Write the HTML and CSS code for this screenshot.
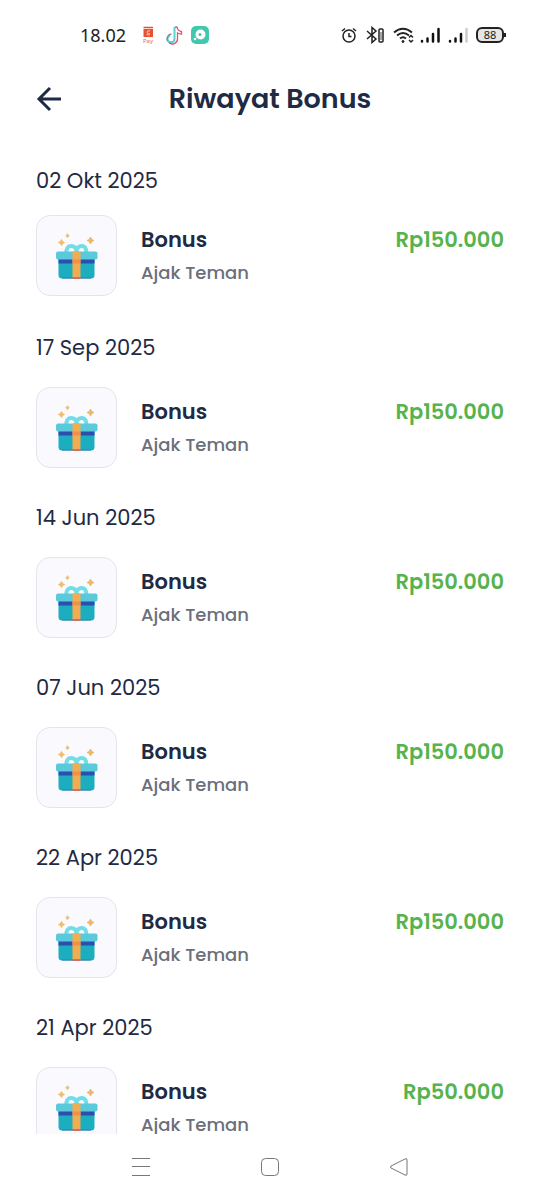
FILE: index.html
```html
<!DOCTYPE html>
<html lang="id">
<head>
<meta charset="utf-8">
<meta name="viewport" content="width=device-width, initial-scale=1">
<title>Riwayat Bonus</title>
<link rel="stylesheet" href="styles.css">
</head>
<body>
<svg class="sprite" aria-hidden="true">
  <symbol id="gift" viewBox="0 0 44 48">
    <path d="M6.500 7.500L7.500 9.500L9.500 10.500L7.500 11.500L6.500 13.500L5.500 11.500L3.500 10.500L5.500 9.500Z" fill="#efbd69" stroke="#efbd69" stroke-linejoin="round"/>
    <path d="M12.500 1.500L13.200 3L14.500 3.700L13.200 4.400L12.500 6L11.800 4.400L10.500 3.700L11.800 3Z" fill="#efbd69" stroke="#efbd69" stroke-width=".6" stroke-linejoin="round"/>
    <path d="M35.500 5L36.700 7.500L39 8.500L36.700 9.500L35.500 12L34.300 9.500L32 8.500L34.300 7.500Z" fill="#efb95b" stroke="#efb95b" stroke-linejoin="round"/>
    <path d="M11.500 21C10 12 21.500 11.500 21.500 20C21.500 11.500 33 12 31 21" fill="none" stroke="#70dde7" stroke-width="4"/>
    <path d="M3.500 27H39.500V43Q39.500 46.500 36 46.500H7Q3.500 46.500 3.500 43Z" fill="#1caebf"/>
    <path d="M3.500 27H39.500V31.500H3.500Z" fill="#2a4fae"/>
    <rect x="1" y="19.500" width="41.500" height="8" rx="2" fill="#5bc9dc"/>
    <path d="M17.500 19.500H25.500V46.500H17.500Z" fill="#f1ad50"/>
    <path d="M17.500 27.500H25.500V31.500H17.500Z" fill="#ee914b"/>
    <path d="M7 46H36" stroke="#3b78c0"/>
    <path d="M17.500 46H25.500" stroke="#e8615a" stroke-width="1.500"/>
  </symbol>
</svg>

<div class="statusbar">
  <div class="status-left">
    <span class="clock">18.02</span>
    <svg class="app-icon" viewBox="0 0 20 20" aria-hidden="true">
      <path d="M5.500 4H15V12H5.500Z" fill="#e8502f"/>
      <path d="M5.500 2.500H15" fill="none" stroke="#e8502f" stroke-width="1.500"/>
      <path d="M12 6Q9 5 9 7T12 9Q11 11 8.500 9.500" fill="none" stroke="#ffc8b6"/>
      <text x="10" y="18" class="pay">Pay</text>
    </svg>
    <svg class="app-icon" viewBox="0 0 20 20" aria-hidden="true">
      <g fill="none" stroke-width="1.300">
        <path d="M10.500 2V14A3.500 3.500 0 1 1 6 10.500" stroke="#54d3d4" stroke-width="2"/>
        <path d="M13 2Q13.500 6 17.500 6.500V9Q15 9 13.500 8V14A5 5 0 0 1 5 17.500" stroke="#ed4d70"/>
        <path d="M11 2H13.500M7.500 9A5 5 0 0 0 3.500 16" stroke="#8b8992"/>
      </g>
    </svg>
    <svg class="app-icon" viewBox="0 0 20 20" aria-hidden="true">
      <rect x="1" y="1" width="18" height="18" rx="5" fill="#40c7ae"/>
      <circle cx="10.500" cy="9.500" r="5" fill="#fff"/>
      <circle cx="5" cy="14" r="1.300" fill="#fff"/>
      <circle cx="10" cy="9.500" r="1.500" fill="#40c7ae"/>
    </svg>
  </div>
  <div class="status-right">
    <svg class="alarm" viewBox="0 0 16 18" fill="none" stroke="#222" stroke-width="1.500" aria-hidden="true">
      <circle cx="8" cy="10" r="6"/><path d="M8 7V10.500H10.500M1 5L4 2.500M15 5L12 2.500"/>
    </svg>
    <svg class="bluetooth" viewBox="0 0 20 18" fill="none" stroke="#222" stroke-width="1.500" aria-hidden="true">
      <path d="M2 5L11 13L7 16.500V1.500L11 5L2 13"/><rect x="14" y="3" width="4" height="13" rx="1"/><path d="M16 6V14" stroke="#888"/>
    </svg>
    <svg class="wifi" viewBox="0 0 22 18" fill="none" stroke="#222" stroke-width="2" aria-hidden="true">
      <path d="M1 6.500Q10 -1 19 6.500M4 9.500Q10 4.500 16 9.500M7 12.500Q10 10 13 12.500"/>
      <circle cx="10" cy="15.500" r="1" fill="#222" stroke-width="1"/>
      <path d="M16 11.500L18 9.500L20 11.500M16 14L18 16L20 14" stroke-width="1.500"/>
    </svg>
    <svg class="signal" viewBox="0 0 20 18" stroke="#111" stroke-width="2.500" stroke-linecap="round" aria-hidden="true">
      <path d="M2 15V15.500M7.500 12.500V15.500M13 8V15.500M18.500 3V15.500"/>
    </svg>
    <svg class="signal" viewBox="0 0 20 18" stroke="#111" stroke-width="2.500" stroke-linecap="round" aria-hidden="true">
      <path d="M2 15V15.500M7.500 12.500V15.500M13 8V15.500"/><path d="M18.500 3V15.500" stroke="#ccc"/>
    </svg>
    <span class="battery">88</span>
  </div>
</div>

<header class="header">
  <button class="back" type="button" aria-label="Kembali">
    <svg viewBox="0 0 26 26" fill="none" stroke="#1f2a44" stroke-width="3" aria-hidden="true"><path d="M25 13H3M14 2L3 13L14 24"/></svg>
  </button>
  <h1 class="title">Riwayat Bonus</h1>
</header>

<main class="history">
  <section class="group">
    <h2 class="date">02 Okt 2025</h2>
    <div class="entry">
      <div class="tile"><svg class="gift"><use href="#gift"/></svg></div>
      <div class="info"><p class="name">Bonus</p><p class="detail">Ajak Teman</p></div>
      <p class="amount">Rp150.000</p>
    </div>
  </section>
  <section class="group">
    <h2 class="date">17 Sep 2025</h2>
    <div class="entry">
      <div class="tile"><svg class="gift"><use href="#gift"/></svg></div>
      <div class="info"><p class="name">Bonus</p><p class="detail">Ajak Teman</p></div>
      <p class="amount">Rp150.000</p>
    </div>
  </section>
  <section class="group">
    <h2 class="date">14 Jun 2025</h2>
    <div class="entry">
      <div class="tile"><svg class="gift"><use href="#gift"/></svg></div>
      <div class="info"><p class="name">Bonus</p><p class="detail">Ajak Teman</p></div>
      <p class="amount">Rp150.000</p>
    </div>
  </section>
  <section class="group">
    <h2 class="date">07 Jun 2025</h2>
    <div class="entry">
      <div class="tile"><svg class="gift"><use href="#gift"/></svg></div>
      <div class="info"><p class="name">Bonus</p><p class="detail">Ajak Teman</p></div>
      <p class="amount">Rp150.000</p>
    </div>
  </section>
  <section class="group">
    <h2 class="date">22 Apr 2025</h2>
    <div class="entry">
      <div class="tile"><svg class="gift"><use href="#gift"/></svg></div>
      <div class="info"><p class="name">Bonus</p><p class="detail">Ajak Teman</p></div>
      <p class="amount">Rp150.000</p>
    </div>
  </section>
  <section class="group">
    <h2 class="date">21 Apr 2025</h2>
    <div class="entry">
      <div class="tile"><svg class="gift"><use href="#gift"/></svg></div>
      <div class="info"><p class="name">Bonus</p><p class="detail">Ajak Teman</p></div>
      <p class="amount">Rp50.000</p>
    </div>
  </section>
</main>

<nav class="navbar" aria-label="Navigasi sistem">
  <button class="nav-button" type="button" aria-label="Menu"><svg viewBox="0 0 20 20"><path d="M1 1.500H19M1 9.500H19M1 18.500H19"/></svg></button>
  <button class="nav-button" type="button" aria-label="Beranda"><svg viewBox="0 0 20 20"><rect x="1.500" y="1.500" width="17" height="17" rx="4"/></svg></button>
  <button class="nav-button" type="button" aria-label="Kembali ke layar sebelumnya"><svg viewBox="0 0 20 20"><path d="M2 9Q1 10 2 11L16 18Q18 19 18 17V3Q18 1 16 2Z"/></svg></button>
</nav>
</body>
</html>
```
FILE: styles.css
```css
* { box-sizing: border-box; }

body {
  margin: 0;
  height: 100vh;
  display: flex;
  flex-direction: column;
  background: #fff;
  color: #1f2a44;
  font-family: Poppins, Inter, sans-serif;
}

h1, h2, p { margin: 0; }

button {
  padding: 0;
  border: 0;
  background: none;
  cursor: pointer;
}

svg { display: block; }

.sprite {
  position: absolute;
  width: 0;
  height: 0;
}

.statusbar {
  flex: none;
  display: flex;
  align-items: center;
  justify-content: space-between;
  height: 69px;
  padding: 0 36px 0 80px;
  color: #222;
  font-family: "Noto Sans", sans-serif;
}

.status-left {
  display: flex;
  align-items: center;
  gap: 6px;
}

.clock {
  margin-right: 6px;
  font-size: 18px;
}

.app-icon {
  width: 20px;
  height: 20px;
}

.pay {
  fill: #e8694e;
  font-size: 6px;
  text-anchor: middle;
}

.status-right {
  display: flex;
  align-items: center;
  gap: 8px;
}

.alarm { width: 16px; height: 18px; }
.bluetooth { width: 20px; height: 18px; }
.wifi { width: 22px; height: 18px; margin-right: -3px; }
.signal { width: 20px; height: 18px; }

.battery {
  position: relative;
  width: 28px;
  height: 16px;
  border: 2px solid #222;
  border-radius: 6px;
  background: #e6e6e6;
  font-size: 11px;
  line-height: 12px;
  text-align: center;
}

.battery::after {
  content: "";
  position: absolute;
  top: 4px;
  right: -4px;
  width: 2px;
  height: 4px;
  background: #222;
}

.header {
  flex: none;
  display: grid;
  grid-template-columns: 40px 1fr 40px;
  align-items: center;
  height: 60px;
  padding: 0 36px;
}

.back svg { width: 26px; height: 26px; }

.title {
  font-size: 27px;
  font-weight: 600;
  line-height: 40px;
  text-align: center;
}

.history {
  flex: 1;
  min-height: 0;
  overflow: hidden;
  padding: 37px 36px 0;
}

.group {
  display: flex;
  flex-direction: column;
  gap: 24px;
  margin-bottom: 35px;
}

.group:first-child {
  gap: 19px;
  margin-bottom: 37px;
}

.date {
  font-size: 21px;
  font-weight: 400;
  line-height: 30px;
}

.entry {
  display: flex;
  align-items: flex-start;
}

.tile {
  flex: none;
  display: grid;
  place-items: center;
  width: 81px;
  height: 81px;
  margin-right: 24px;
  border: 1px solid #e4e4ec;
  border-radius: 14px;
  background: #f9f9fe;
}

.gift { width: 44px; height: 48px; }

.info {
  flex: 1;
  padding-top: 10px;
}

.name {
  font-size: 21px;
  font-weight: 600;
  line-height: 30px;
}

.detail {
  margin-top: 4px;
  color: #6b6f7b;
  font-size: 18px;
  font-weight: 500;
  line-height: 28px;
}

.amount {
  padding-top: 10px;
  color: #57b34e;
  font-size: 21px;
  font-weight: 600;
  line-height: 30px;
}

.navbar {
  flex: none;
  display: flex;
  align-items: center;
  justify-content: center;
  gap: 109px;
  height: 66px;
  background: #fff;
}

.nav-button svg {
  width: 20px;
  height: 20px;
  fill: none;
  stroke: #777;
  stroke-width: 1;
}
```
